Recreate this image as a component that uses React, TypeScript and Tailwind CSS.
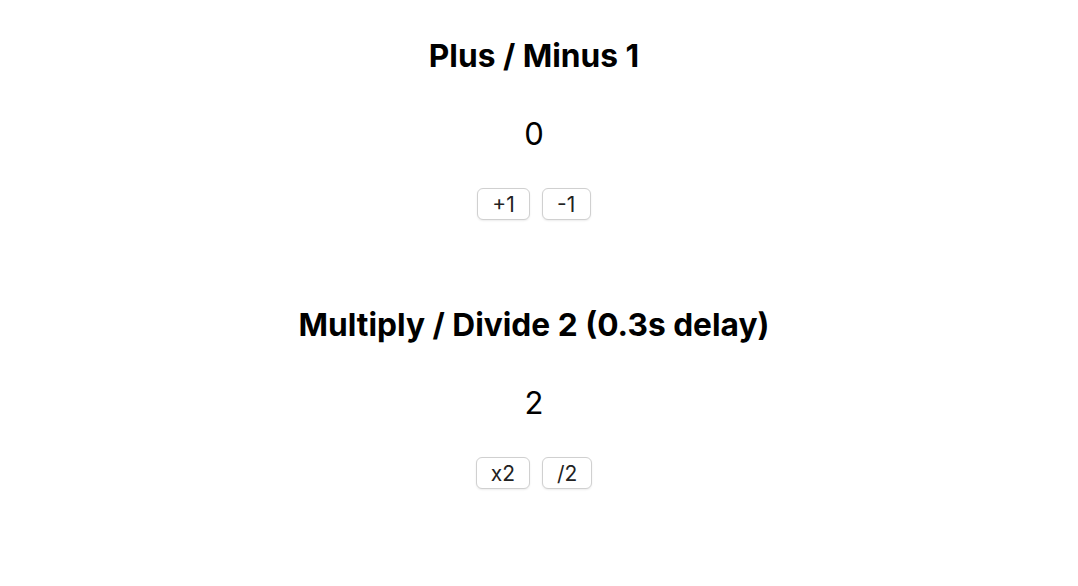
import React, { useState } from 'react';

const font = { fontFamily: 'Inter, "Noto Sans", sans-serif' };

function Counter({
  title,
  initial,
  actions,
}: {
  title: string;
  initial: number;
  actions: { label: string; apply: (n: number) => number }[];
}) {
  const [value, setValue] = useState<number>(initial);

  return (
    <div className="flex flex-col items-center">
      <h2 className="h-[52px] flex items-center text-[31.7px] font-bold text-black">{title}</h2>
      <div className="mt-[26px] h-[52px] flex items-center text-[31px] text-black">{value}</div>
      <div className="mt-[28px] flex gap-3">
        {actions.map((a) => (
          <button
            key={a.label}
            type="button"
            className="h-8 min-w-[49px] px-[14px] rounded-[6px] border border-[#d0d0d0] bg-white text-[21px] text-[#222] shadow-[0_1px_2px_rgba(0,0,0,0.08)]"
            onClick={() => setValue(a.apply(value))}
          >
            {a.label}
          </button>
        ))}
      </div>
    </div>
  );
}

export default function App() {
  return (
    <div className="min-h-[586px] w-full bg-white pt-[30px] pr-[10px]" style={font}>
      <div className="flex flex-col gap-[79px]">
        <Counter
          title="Plus / Minus 1"
          initial={0}
          actions={[
            { label: '+1', apply: (n) => n + 1 },
            { label: '-1', apply: (n) => n - 1 },
          ]}
        />
        <Counter
          title="Multiply / Divide 2 (0.3s delay)"
          initial={2}
          actions={[
            { label: 'x2', apply: (n) => n * 2 },
            { label: '/2', apply: (n) => n / 2 },
          ]}
        />
      </div>
    </div>
  );
}
